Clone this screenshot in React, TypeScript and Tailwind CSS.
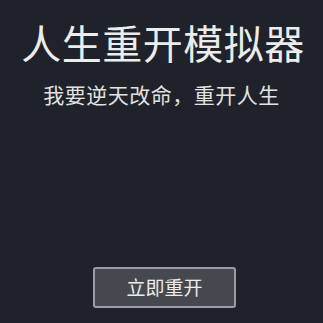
export default function App() {
  return (
    <div
      className="flex h-[323px] w-[323px] flex-col items-center bg-[#1f222a] text-[#ececec]"
      style={{ fontFamily: '"Noto Sans CJK SC", "Noto Sans", sans-serif' }}
    >
      <h1 className="mt-[17px] pl-[3px] text-[40px] leading-[50px] font-normal tracking-[0.5px]">人生重开模拟器</h1>
      <p className="mt-[13px] text-[21px] leading-[28px] tracking-[0.5px] text-[#e2e2e2]">我要逆天改命，重开人生</p>
      <div className="flex-1" />
      <button className="mb-[15px] ml-[6px] h-[41px] w-[143px] rounded-[3px] border-2 border-[#9a9da3] bg-[#46484f] text-[19px] text-[#ececec]">
        立即重开
      </button>
    </div>
  );
}
